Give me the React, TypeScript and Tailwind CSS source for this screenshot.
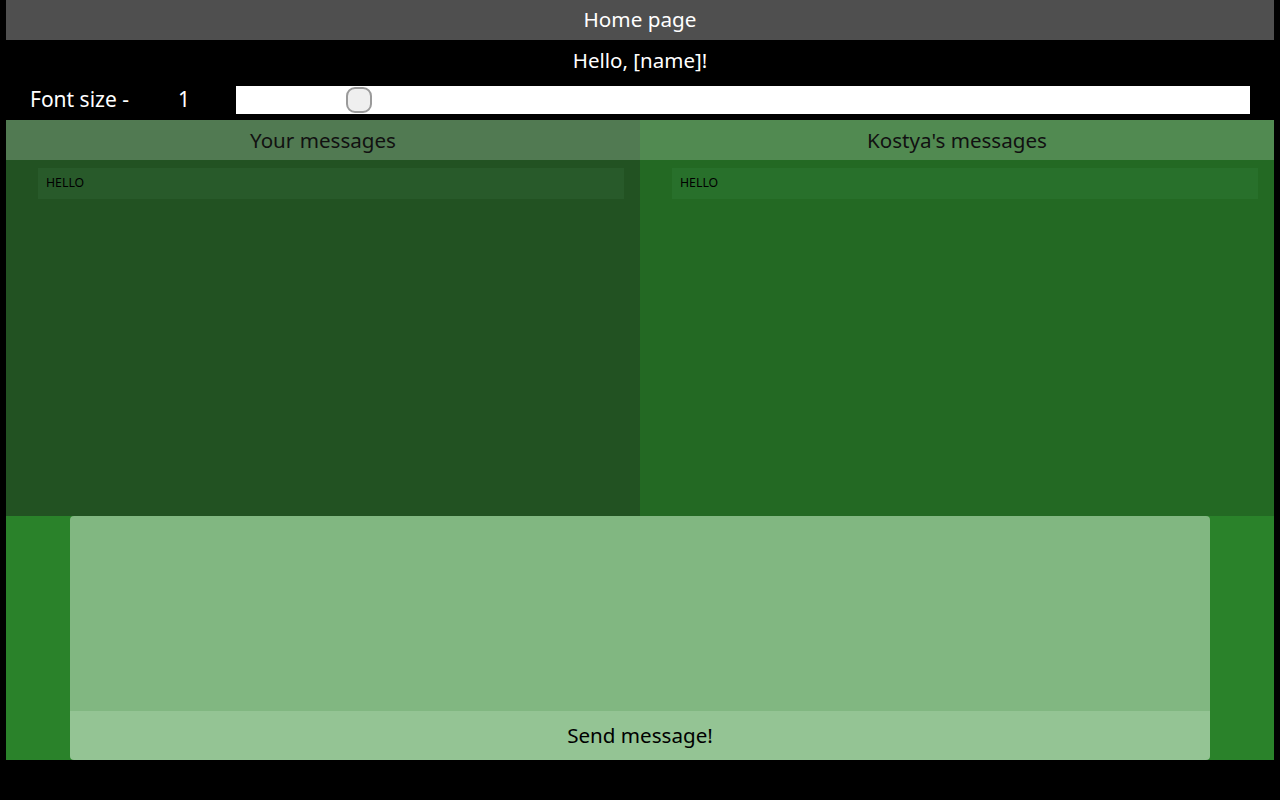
import React from "react";

export default function App() {
  const font = { fontFamily: '"Noto Sans", "Open Sans", sans-serif' };
  return (
    <div className="w-[1280px] h-[800px] bg-black px-[6px]" style={font}>
      <div className="h-[40px] bg-[#4f4f4f] flex items-center justify-center text-white text-[20.7px]">
        Home page
      </div>
      <div className="h-[40px] flex items-center justify-center text-white text-[20.5px]">
        Hello, [name]!
      </div>
      <div className="h-[40px] flex items-center text-white text-[21px]">
        <span className="ml-[24px] w-[148px]">Font size -</span>
        <span className="w-[58px]">1</span>
        <div className="w-[1014px] h-[28px] bg-white relative">
          <div className="absolute left-[110px] top-[1px] w-[26px] h-[26px] rounded-[9px] bg-[#efefef] border-2 border-[#9a9a9a]" />
        </div>
      </div>
      <div className="flex h-[396px]">
        <div className="flex-1 bg-[#225222] flex flex-col">
          <div className="h-[40px] bg-[#517a52] flex items-center justify-center text-[20.6px] text-[#111]">
            Your messages
          </div>
          <div className="pl-[32px] pr-[16px] pt-[8px]">
            <div className="h-[31px] bg-[#285a2a] flex items-center px-[8px] text-[12.3px] text-black">
              HELLO
            </div>
          </div>
        </div>
        <div className="flex-1 bg-[#236923] flex flex-col">
          <div className="h-[40px] bg-[#518a51] flex items-center justify-center text-[20.6px] text-[#111]">
            Kostya's messages
          </div>
          <div className="pl-[32px] pr-[16px] pt-[8px]">
            <div className="h-[31px] bg-[#28702b] flex items-center px-[8px] text-[12.3px] text-black">
              HELLO
            </div>
          </div>
        </div>
      </div>
      <div className="h-[244px] bg-[#2a822a] px-[64px]">
        <div className="h-full flex flex-col rounded-[4px] overflow-hidden">
          <div className="h-[195px] bg-[#81b781]" />
          <div className="flex-1 bg-[#94c494] flex items-center justify-center text-[20.6px] text-black">
            Send message!
          </div>
        </div>
      </div>
    </div>
  );
}
